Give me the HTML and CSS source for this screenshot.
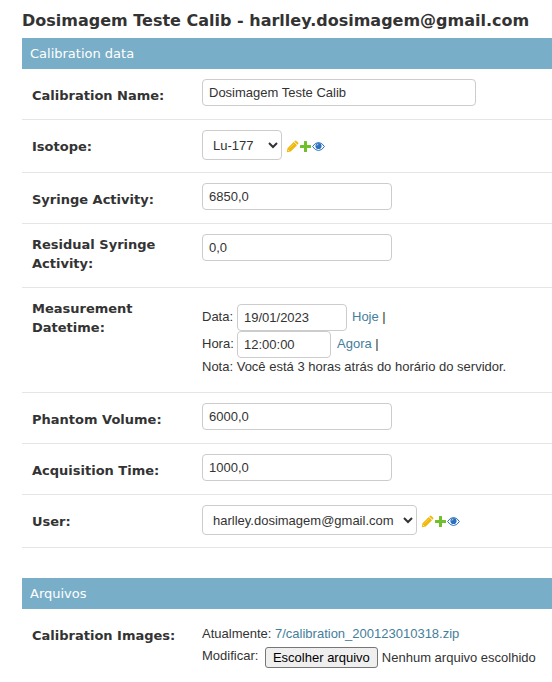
FILE: index.html
```html
<!DOCTYPE html>
<html lang="pt-BR"><head><meta charset="utf-8"><title>Calibration</title><link rel="stylesheet" href="styles.css"></head>
<body>
<svg class="defs" width="0" height="0">
<symbol id="pencil" viewBox="0 0 13 13"><path fill="#efb80b" d="M.8 12.200l.7-3.900L7.800 2l3.200 3.200L4.700 11.500zM8.300 1.500l.6-.6q.8-.7 1.500 0l1.700 1.700q.7.700 0 1.500l-.6.6z"/><path stroke="#fff" stroke-opacity=".6" stroke-width=".5" d="M3.500 8.500l4.500-4.500"/><path fill="#fff" d="M2.200 9.700l1.100 1.100-.8.200-.5-.5z"/></symbol>
<symbol id="plus" viewBox="0 0 13 13"><path fill="#70bf2b" d="M5.500 1h2q.5 0 .5.500V5h3.500q.5 0 .5.500v2q0 .5-.5.500H8v3.500q0 .5-.5.500h-2q-.5 0-.5-.5V8H1.500Q1 8 1 7.500v-2Q1 5 1.500 5H5V1.500q0-.5.500-.5z"/></symbol>
<symbol id="eye" viewBox="0 0 13 13"><path fill="none" stroke="#2b70bf" d="M.6 6.500Q3 2.500 6.500 2.500T12.400 6.500Q10 10.500 6.500 10.500T.6 6.500z"/><circle cx="6.500" cy="6" r="3.100" fill="#2b70bf"/><path d="M4.900 5.700q0-1.500 1.500-1.500" fill="none" stroke="#fff" stroke-width=".6"/></symbol>
</svg>
<main>
<h1>Dosimagem Teste Calib - harlley.dosimagem@gmail.com</h1>
<section class="calibration">
<h2>Calibration data</h2>
<div class="row"><label>Calibration Name:</label><input class="wide" value="Dosimagem Teste Calib"></div>
<div class="row select-row"><label>Isotope:</label><select class="isotope"><option>Lu-177</option></select><span class="actions"><svg><use href="#pencil"/></svg><svg><use href="#plus"/></svg><svg><use href="#eye"/></svg></span></div>
<div class="row"><label>Syringe Activity:</label><input value="6850,0"></div>
<div class="row residual"><label>Residual Syringe Activity:</label><input value="0,0"></div>
<div class="row datetime"><label>Measurement Datetime:</label><div class="stack">
<div class="line"><span class="caption">Data:</span><input class="date" value="19/01/2023"><span><a>Hoje</a> |</span></div>
<div class="line"><span class="caption">Hora:</span><input class="time" value="12:00:00"><span><a>Agora</a> |</span></div>
<div class="note">Nota: Você está 3 horas atrás do horário do servidor.</div></div></div>
<div class="row"><label>Phantom Volume:</label><input value="6000,0"></div>
<div class="row"><label>Acquisition Time:</label><input value="1000,0"></div>
<div class="row select-row"><label>User:</label><select class="user"><option>harlley.dosimagem@gmail.com</option></select><span class="actions"><svg><use href="#pencil"/></svg><svg><use href="#plus"/></svg><svg><use href="#eye"/></svg></span></div>
</section>
<section>
<h2>Arquivos</h2>
<div class="row files"><label>Calibration Images:</label><div class="stack"><div>Atualmente: <a>7/calibration_200123010318.zip</a></div><div class="upload"><span>Modificar:</span><button type="button">Escolher arquivo</button><span class="filename">Nenhum arquivo escolhido</span></div></div></div>
</section>
</main></body></html>
```
FILE: styles.css
```css
* { box-sizing: border-box; }
body { margin: 0; height: 682px; overflow: hidden; background: #fff; color: #333; font: 13px "Liberation Sans", Arial, sans-serif; }
.defs { display: none; }
main { padding-left: 22px; }
h1 { margin: 0; height: 38px; padding-top: 11px; font: bold 16px/20px "DejaVu Sans", sans-serif; white-space: nowrap; }
h2 { margin: 0; height: 31px; padding-left: 8px; background: #79aec8; color: #fff; font: 13px/31px "DejaVu Sans", sans-serif; }
.calibration { margin-bottom: 30px; }
.row { display: flex; align-items: flex-start; height: 51px; padding: 10px 10px 0; border-bottom: 1px solid #e5e5e5; }
label { flex: 0 0 170px; padding: 7px 10px 0 0; font: bold 13px/19px "DejaVu Sans", sans-serif; }
input, select { border: 1px solid #ccc; border-radius: 4px; color: #333; background: #fff; font: 13px "Liberation Sans", sans-serif; margin: 0; }
input { width: 190px; height: 27px; padding: 5px 6px; }
input.wide { width: 274px; }
.select-row { height: 53px; }
select { height: 30px; padding: 0 6px; }
.isotope { width: 80px; }
.user { width: 215px; }
.actions { display: flex; padding: 10px 0 0 4px; }
.actions svg { width: 13px; height: 13px; }
.residual { height: 64px; }
.residual label { padding-top: 1px; }
.datetime { height: 105px; }
.datetime label { padding-top: 1px; }
.stack { flex: 1; white-space: nowrap; }
.datetime .stack { padding-top: 6px; }
.line { display: flex; height: 27px; line-height: 25px; }
.caption { width: 35px; }
input.date { width: 110px; margin-right: 5px; }
input.time { width: 94px; margin-right: 6px; }
.note { line-height: 18px; }
a { color: #447e9b; }
.files { height: 73px; border: 0; }
.files .stack { padding-top: 5px; line-height: 19px; }
.upload { display: flex; align-items: flex-start; padding-top: 3px; }
.upload button { width: 113px; height: 21px; margin: 1px 3.5px 0 7px; padding: 0 1px 0 0; border: 1px solid #767676; border-radius: 3px; background: #efefef; color: #000; font: 13px "Liberation Sans", sans-serif; }
.upload .filename { padding-top: 2px; }
```
